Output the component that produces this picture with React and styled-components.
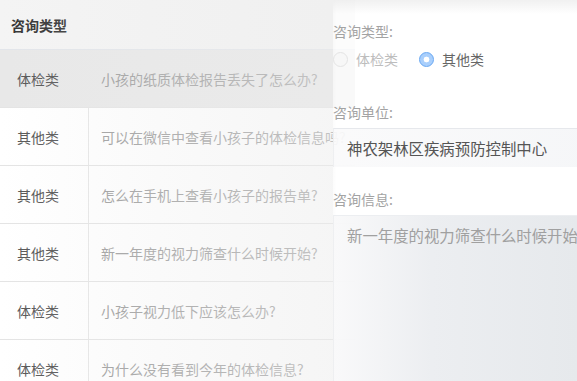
import React, { useState } from "react";
import styled, { createGlobalStyle } from "styled-components";

const GlobalStyle = createGlobalStyle`
  * { box-sizing: border-box; }
  html, body { margin: 0; padding: 0; background: #fff; }
  body {
    font-family: "Noto Sans CJK SC", "Liberation Sans", sans-serif;
    -webkit-font-smoothing: antialiased;
  }
`;

const questions = [
  { id: 1, type: "体检类", title: "小孩的纸质体检报告丢失了怎么办?" },
  { id: 2, type: "其他类", title: "可以在微信中查看小孩子的体检信息吗?" },
  { id: 3, type: "其他类", title: "怎么在手机上查看小孩子的报告单?" },
  { id: 4, type: "其他类", title: "新一年度的视力筛查什么时候开始?" },
  { id: 5, type: "体检类", title: "小孩子视力低下应该怎么办?" },
  { id: 6, type: "体检类", title: "为什么没有看到今年的体检信息?" },
];

function App() {
  const [selected] = useState(1);
  const [kind, setKind] = useState("其他类");

  const renderRows = () => {
    return questions.map((q) => (
      <Row key={q.id} active={q.id === selected}>
        <TypeCell>{q.type}</TypeCell>
        <TitleCell active={q.id === selected}>{q.title}</TitleCell>
      </Row>
    ));
  };

  return (
    <>
      <GlobalStyle />
      <Screen>
        <ListPanel>
          <HeadRow>咨询类型</HeadRow>
          {renderRows()}
        </ListPanel>
        <Form>
          <Label>咨询类型:</Label>
          <RadioGroup>
            <RadioOption onClick={() => setKind("体检类")} disabled>
              <RadioDot checked={kind === "体检类"} disabled />
              <RadioText disabled>体检类</RadioText>
            </RadioOption>
            <RadioOption onClick={() => setKind("其他类")}>
              <RadioDot checked={kind === "其他类"} />
              <RadioText>其他类</RadioText>
            </RadioOption>
          </RadioGroup>
          <Label spaced>咨询单位:</Label>
          <InputBox>神农架林区疾病预防控制中心</InputBox>
          <Label spaced small>咨询信息:</Label>
          <TextBox>新一年度的视力筛查什么时候开始?</TextBox>
        </Form>
      </Screen>
    </>
  );
}

export default App;

const Screen = styled.div`
  width: 577px;
  height: 381px;
  overflow: hidden;
  display: flex;
  background: #fff;
`;

/* the list is 355 wide, the form slides 22px over its right end */
const ListPanel = styled.div`
  width: 355px;
  margin-right: -22px;
  flex-shrink: 0;
  display: flex;
  flex-direction: column;
  background: #fff;
  position: relative;
  z-index: 1;
  &::after {
    content: "";
    position: absolute;
    top: 0;
    bottom: 0;
    left: 0;
    right: 22px;
    pointer-events: none;
    box-shadow: 2px 0 2px rgba(0, 0, 0, 0.05);
    background: linear-gradient(
      to right,
      rgba(236, 236, 236, 0) 0%,
      rgba(236, 236, 236, 0.25) 45%,
      rgba(236, 236, 236, 0.5) 100%
    );
  }
`;

const HeadRow = styled.div`
  height: 50px;
  flex-shrink: 0;
  display: flex;
  align-items: center;
  padding-left: 11px;
  font-size: 14px;
  font-weight: bold;
  color: #333;
  background: #f4f4f4;
  border-bottom: 1px solid #e2e5ea;
`;

const Row = styled.div`
  height: 58px;
  flex-shrink: 0;
  display: flex;
  align-items: stretch;
  background: ${(p) => (p.active ? "#e8e8e8" : "#fff")};
  border-bottom: 1px solid #e4e4e4;
  font-size: 14px;
`;

const TypeCell = styled.div`
  width: 88px;
  flex-shrink: 0;
  display: flex;
  align-items: center;
  padding-left: 17px;
  color: #555;
`;

const TitleCell = styled.div`
  flex: 1;
  display: flex;
  align-items: center;
  padding-left: 12px;
  white-space: nowrap;
  overflow: hidden;
  color: #999;
  border-left: 1px solid ${(p) => (p.active ? "transparent" : "#e6e6e6")};
`;

const Form = styled.div`
  flex: 1;
  min-width: 0;
  position: relative;
  z-index: 2;
  display: flex;
  flex-direction: column;
  padding-top: 22px;
  background: linear-gradient(
    to bottom,
    rgba(239, 239, 239, 0.9) 0,
    rgba(255, 255, 255, 0.74) 14px
  );
`;

const Label = styled.div`
  font-size: 14px;
  line-height: 18px;
  color: #a3a3a3;
  margin-top: ${(p) => (p.spaced ? (p.small ? "23px" : "35px") : "0")};
`;

const RadioGroup = styled.div`
  display: flex;
  align-items: center;
  gap: 21px;
  margin-top: 10px;
  height: 18px;
`;

const RadioOption = styled.div`
  display: flex;
  align-items: center;
  gap: 8px;
  cursor: ${(p) => (p.disabled ? "default" : "pointer")};
`;

const RadioDot = styled.span`
  width: 15px;
  height: 15px;
  border-radius: 50%;
  display: inline-block;
  flex-shrink: 0;
  border: 1.5px solid ${(p) => (p.checked ? "#66a6f2" : "#e4e4e4")};
  background: ${(p) =>
    p.checked
      ? "radial-gradient(circle, #fff 0 2.6px, #a9cffc 3.2px)"
      : "#f7f7f7"};
`;

const RadioText = styled.span`
  font-size: 14px;
  color: ${(p) => (p.disabled ? "#bdbdbd" : "#666")};
`;

const InputBox = styled.div`
  margin-top: 7px;
  height: 39px;
  display: flex;
  align-items: center;
  padding-left: 13px;
  font-size: 15.4px;
  color: #555;
  white-space: nowrap;
  background: linear-gradient(
    to right,
    rgba(249, 249, 250, 0.8),
    rgba(245, 246, 248, 0.95)
  );
  border-top: 1px solid #e6e8ec;
  border-left: 1px solid #eeeff1;
`;

const TextBox = styled.div`
  margin-top: 7px;
  flex: 1;
  padding: 9px 0 0 13px;
  font-size: 15.4px;
  line-height: 20px;
  color: #a0a0a0;
  white-space: nowrap;
  overflow: hidden;
  background: linear-gradient(
    to right,
    rgba(248, 248, 249, 0.85) 0%,
    #eceef1 40%,
    #e6e9ec 100%
  );
  border-top: 1px solid #eceef1;
  border-left: 1px solid #eeeff1;
`;
